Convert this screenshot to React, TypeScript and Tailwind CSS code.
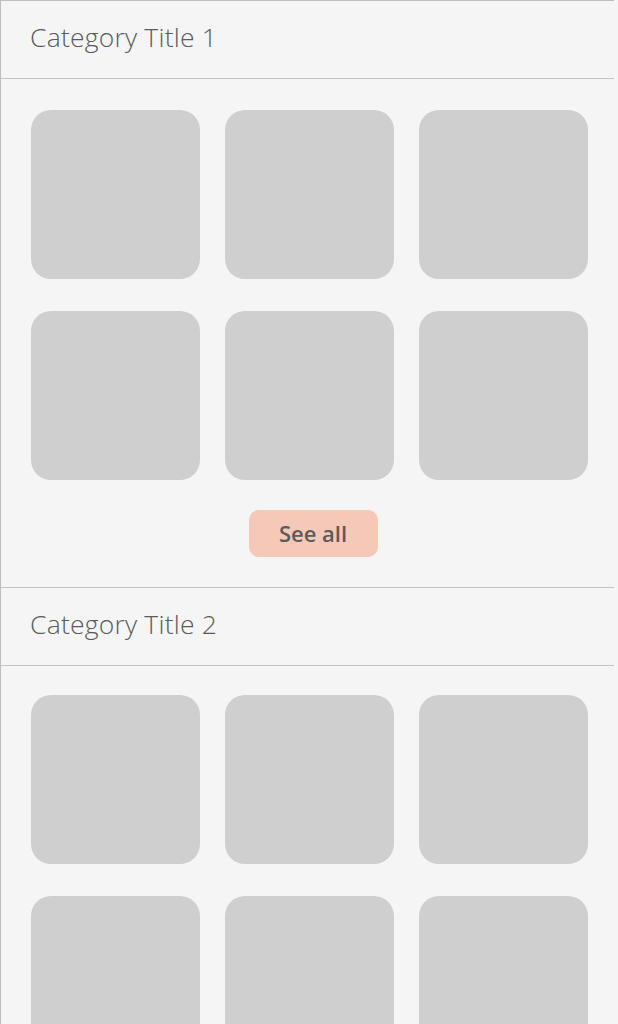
import React from 'react';

const tile = 'w-[169px] h-[169px] rounded-[20px] bg-[#cfcfcf]';

const CategoryHeader = ({ title }: { title: string }) => (
  <div className="h-[78px] border-b border-[#c4c4c4] flex items-center pl-[29px]">
    <h2 className="text-[26.5px] font-light text-[#5b5b5b] tracking-[0.2px] mt-[-3px]">{title}</h2>
  </div>
);

const TileGrid = ({ rows }: { rows: number }) => (
  <div className="flex flex-col gap-[32px] pl-[30px]">
    {Array.from({ length: rows }).map((_, r) => (
      <div key={r} className="flex gap-[25px]">
        <div className={tile} />
        <div className={tile} />
        <div className={tile} />
      </div>
    ))}
  </div>
);

export default function App() {
  return (
    <div className="min-h-screen bg-[#f5f5f5] overflow-hidden" style={{ fontFamily: '"Open Sans", "Noto Sans", sans-serif' }}>
      <div className="w-[614px] h-[1024px] border-l border-t border-[#bdbdbd] overflow-hidden">
        <section>
          <CategoryHeader title="Category Title 1" />
          <div className="pt-[31px] pb-[30px]">
            <TileGrid rows={2} />
            <div className="flex justify-center mt-[30px] pl-[11px]">
              <button className="w-[129px] h-[47px] rounded-[10px] bg-[#f5c8b7] text-[22px] font-semibold text-[#5b5b5b]">
                See all
              </button>
            </div>
          </div>
        </section>
        <section className="border-t border-[#c4c4c4]">
          <CategoryHeader title="Category Title 2" />
          <div className="pt-[29px]">
            <TileGrid rows={2} />
          </div>
        </section>
      </div>
    </div>
  );
}
